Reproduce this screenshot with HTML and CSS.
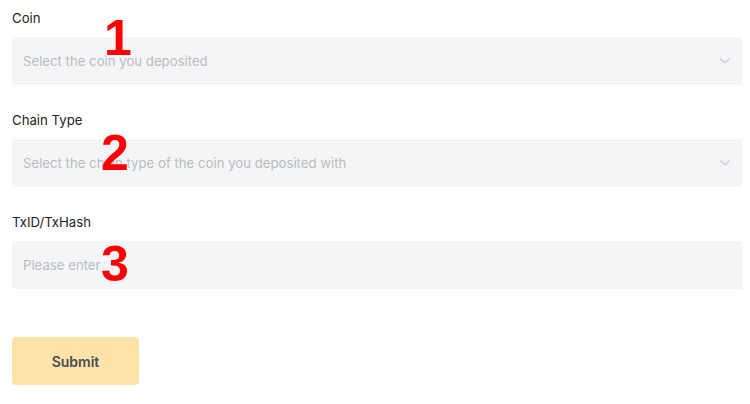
FILE: index.html
```html
<!DOCTYPE html>
<html>
<head>
<meta charset="utf-8">
<link rel="stylesheet" href="styles.css">
</head>
<body>
<form class="form">
  <div class="field">
    <label class="label">Coin</label>
    <div class="box select">
      <span class="placeholder">Select the coin you deposited</span>
      <svg class="chev" width="12" height="8" viewBox="0 0 12 8"><path d="M1.5 1.5 6 6 10.5 1.5" fill="none" stroke="#c4c8cf" stroke-width="1.1"/></svg>
      <span class="mark m1">1</span>
    </div>
  </div>
  <div class="field">
    <label class="label">Chain Type</label>
    <div class="box select">
      <span class="placeholder">Select the chain type of the coin you deposited with</span>
      <svg class="chev" width="12" height="8" viewBox="0 0 12 8"><path d="M1.5 1.5 6 6 10.5 1.5" fill="none" stroke="#c4c8cf" stroke-width="1.1"/></svg>
      <span class="mark m2">2</span>
    </div>
  </div>
  <div class="field">
    <label class="label">TxID/TxHash</label>
    <div class="box">
      <span class="placeholder">Please enter</span>
      <span class="mark m3">3</span>
    </div>
  </div>
  <button type="button" class="submit">Submit</button>
</form>
</body>
</html>
```
FILE: styles.css
```css
* { box-sizing: border-box; }
body {
  margin: 0;
  background: #fff;
  font-family: Inter, "Noto Sans", sans-serif;
}
.form {
  padding: 9px 8px 0 12px;
  display: flex;
  flex-direction: column;
}
.field {
  display: flex;
  flex-direction: column;
  margin-bottom: 26px;
}
.label {
  font-size: 13.2px;
  line-height: 18px;
  color: #1e2329;
  margin-bottom: 10px;
}
.box {
  position: relative;
  height: 48px;
  background: #f4f5f7;
  border-radius: 2px;
  display: flex;
  align-items: center;
  padding: 0 11px 0 11px;
}
.placeholder {
  font-size: 13.2px;
  color: #b7bcc4;
  flex: 1;
}
.mark {
  position: absolute;
  font-family: "Liberation Sans", Arial, sans-serif;
  font-weight: bold;
  font-size: 50px;
  line-height: 1;
  color: #ff0000;
}
.m1 { left: 92px; top: -24px; }
.m2 { left: 89px; top: -11px; }
.m3 { left: 89px; top: -2px; }
.submit {
  margin-top: 22px;
  width: 127px;
  height: 48px;
  border: none;
  border-radius: 4px;
  background: #fee2a8;
  color: #474d57;
  font-family: Inter, "Noto Sans", sans-serif;
  font-weight: 600;
  font-size: 14px;
}
```
